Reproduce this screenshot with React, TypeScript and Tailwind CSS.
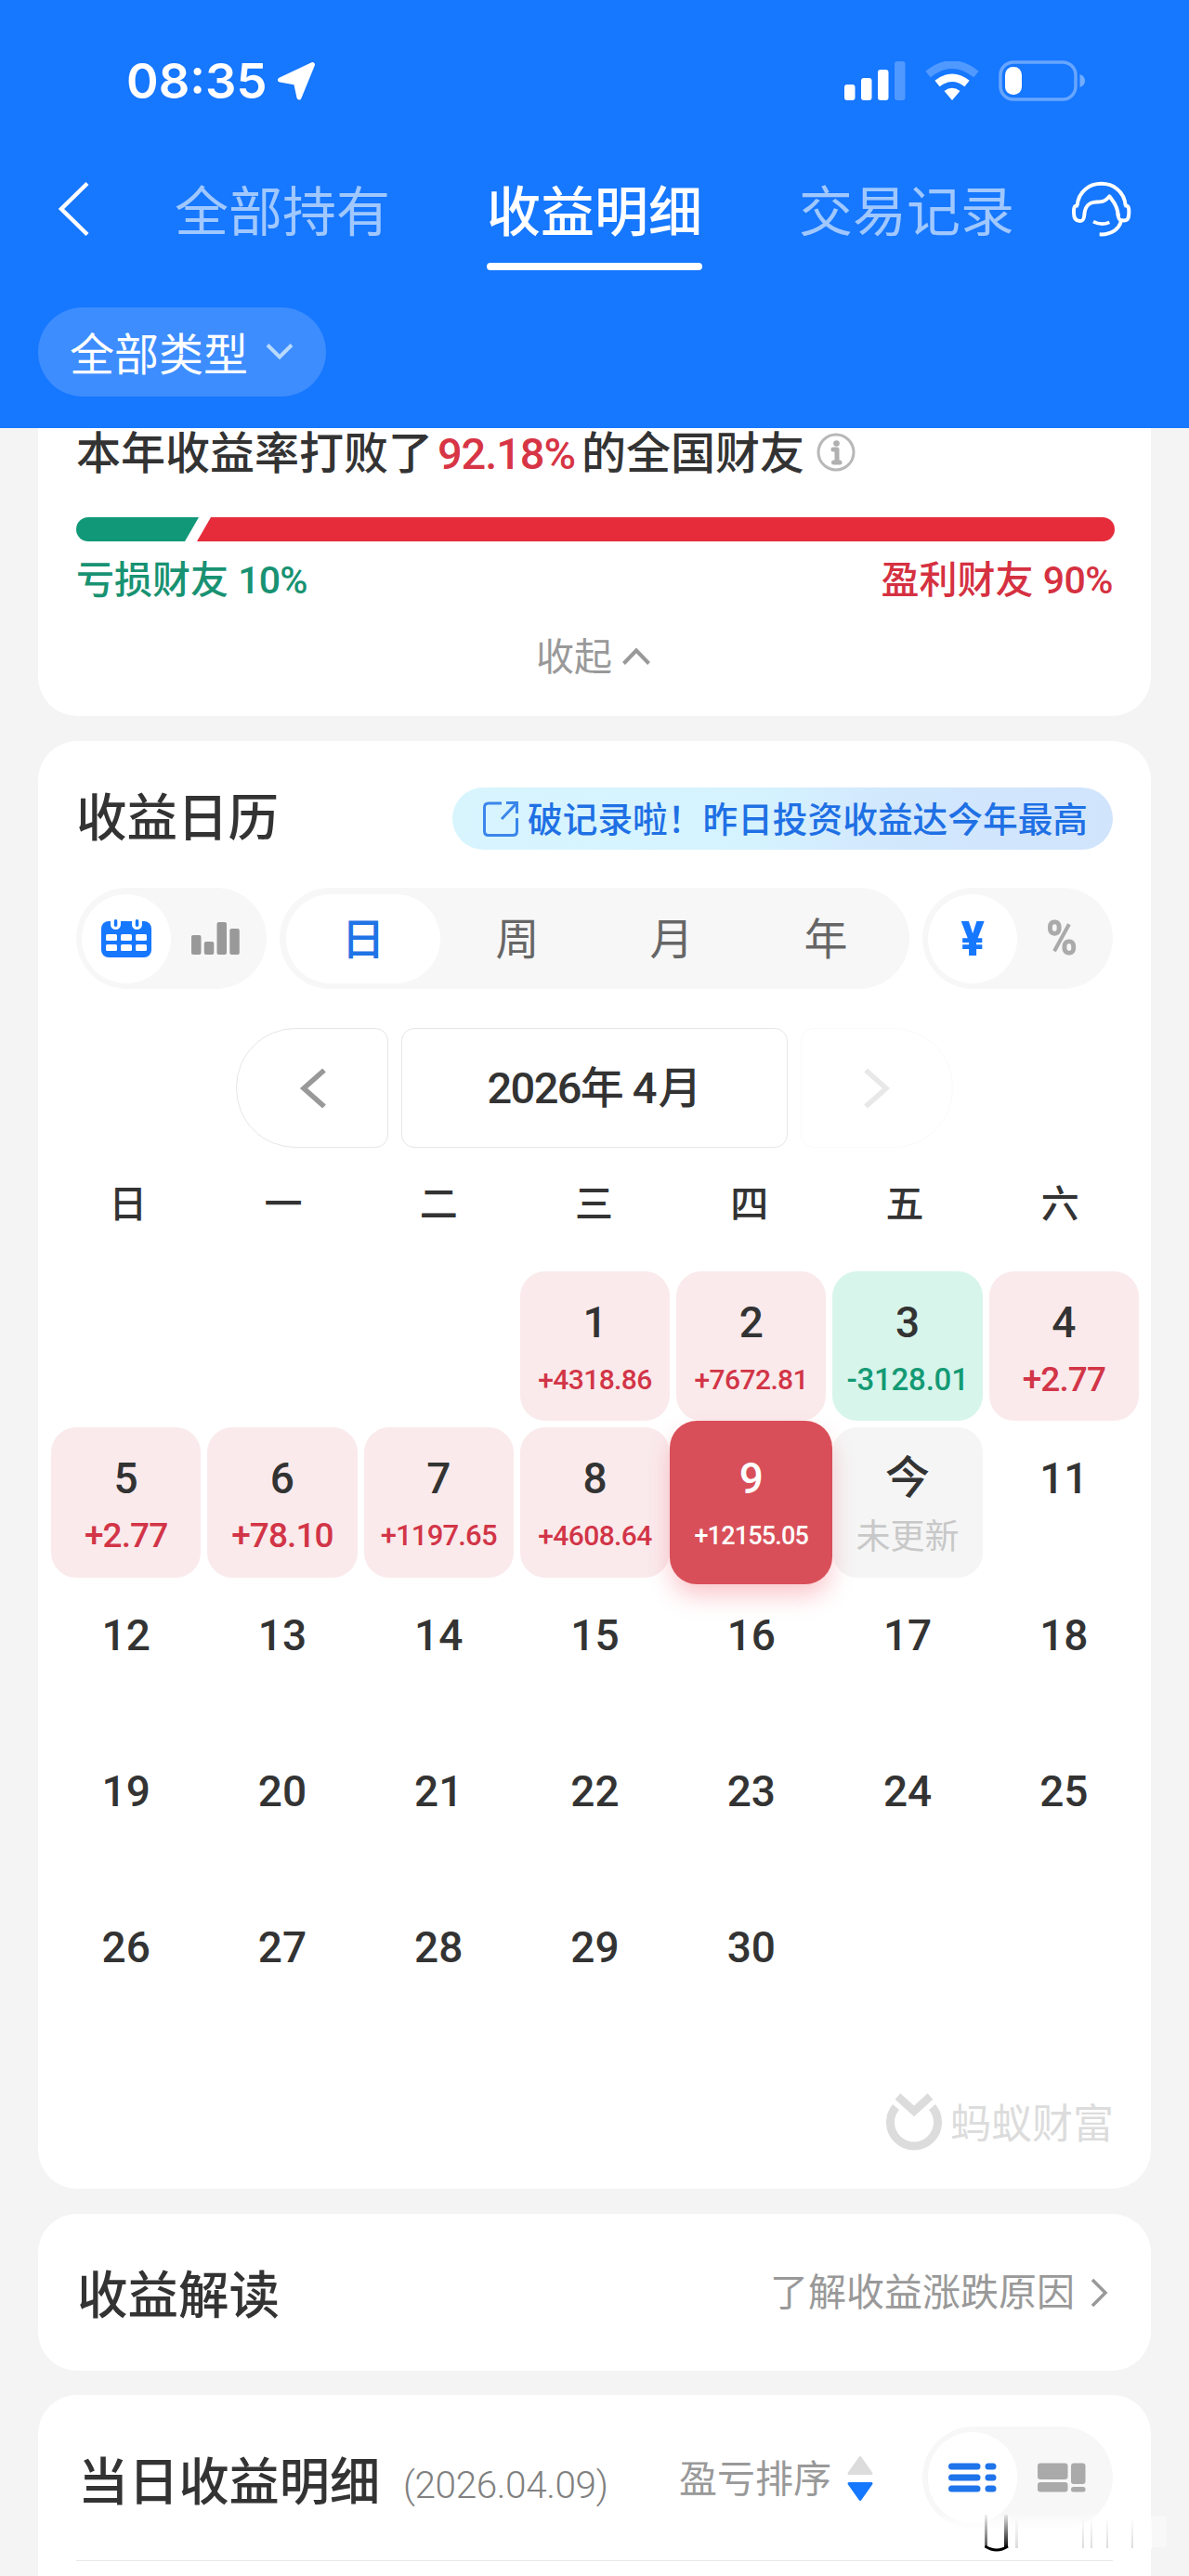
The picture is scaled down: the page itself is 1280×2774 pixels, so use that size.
import React from "react";

type Tone = "up" | "down" | "today" | "selected" | "none";

interface Day {
  label: string;
  amount?: string;
  tone: Tone;
  amountClass?: string;
}

const SMALL = "text-[30px] tracking-[-0.6px]";
const LARGE = "text-[37px] tracking-[-0.9px]";

const leadingBlanks = [0, 1, 2];

const days: Day[] = [
  { label: "1", amount: "+4318.86", tone: "up", amountClass: SMALL },
  { label: "2", amount: "+7672.81", tone: "up", amountClass: SMALL },
  { label: "3", amount: "-3128.01", tone: "down", amountClass: "text-[33px] tracking-[-0.2px]" },
  { label: "4", amount: "+2.77", tone: "up", amountClass: LARGE },
  { label: "5", amount: "+2.77", tone: "up", amountClass: LARGE },
  { label: "6", amount: "+78.10", tone: "up", amountClass: LARGE },
  { label: "7", amount: "+1197.65", tone: "up", amountClass: "text-[31px] tracking-[-0.8px]" },
  { label: "8", amount: "+4608.64", tone: "up", amountClass: SMALL },
  { label: "9", amount: "+12155.05", tone: "selected", amountClass: "text-[27px] tracking-[-0.8px]" },
  { label: "今", amount: "未更新", tone: "today", amountClass: "pt-[2px] text-[37px]" },
  ...Array.from({ length: 20 }, (_, i): Day => ({ label: String(i + 11), tone: "none" })),
];

const cellTone: Record<Tone, string> = {
  up: "bg-[#faeaec] rounded-[27px]",
  down: "bg-[#d8f5ec] rounded-[27px]",
  today: "bg-[#f5f5f5] rounded-[27px]",
  selected:
    "relative z-10 -m-[7px] pt-[7px] rounded-[29px] bg-[#d94f59] shadow-[0_14px_26px_-2px_rgba(240,70,85,0.3)]",
  none: "",
};

const amountTone: Record<Tone, string> = {
  up: "text-[#d23547] font-medium",
  down: "text-[#149a74] font-medium",
  today: "text-[#c8c8c8] font-normal",
  selected: "text-white font-medium",
  none: "",
};

function StatusBar() {
  return (
    <div className="flex h-[74px] items-center pl-[136px]">
      <span className="w-[162px] whitespace-nowrap font-['Inter'] text-[52.5px] font-semibold leading-[74px] text-white">
        08:35
      </span>
      <svg className="h-[43px] w-[43px]" viewBox="0 0 43 43">
        <path
          d="M38.5 3.5 L24 39 L20.5 23 L3.5 20 Z"
          fill="#fff"
          stroke="#fff"
          strokeWidth="5"
          strokeLinejoin="round"
        />
      </svg>
      <svg className="ml-[568px] h-[42px] w-[66px]" viewBox="0 0 66 42" fill="#fff">
        <rect x="0" y="25" width="11.5" height="17" rx="3" />
        <rect x="18" y="18" width="11.5" height="24" rx="3" />
        <rect x="36" y="9" width="11.5" height="33" rx="3" />
        <rect x="54" y="0" width="11.5" height="42" rx="3" opacity="0.25" />
      </svg>
      <svg className="ml-[21px] h-[42px] w-[58px]" viewBox="0 0 58 42">
        <path d="M3 14 Q29 -7 55 14" fill="none" stroke="#fff" strokeWidth="8.5" opacity="0.25" />
        <path d="M13 24 Q29 11.500 45 24" fill="none" stroke="#fff" strokeWidth="8.500" />
        <path d="M29 42 L20.500 32 Q29 25.500 37.500 32 Z" fill="#fff" />
      </svg>
      <svg className="ml-[21px] h-[44px] w-[95px]" viewBox="0 0 95 44">
        <rect x="2" y="2" width="81" height="40" rx="14" fill="none" stroke="#fff" strokeOpacity="0.35" strokeWidth="3.500" />
        <rect x="7" y="7" width="18" height="30" rx="8.500" fill="#fff" />
        <path d="M87.500 15 Q93 17 93 22 Q93 27 87.500 29 Z" fill="#fff" opacity="0.4" />
      </svg>
    </div>
  );
}

function Tabs() {
  const tabs = [
    { name: "全部持有", active: false },
    { name: "收益明细", active: true },
    { name: "交易记录", active: false },
  ];
  return (
    <div className="mt-[50px] flex h-[118px] items-start">
      <svg className="ml-[61px] mt-[21px] h-[60px] w-[36px]" viewBox="0 0 36 60">
        <path d="M33 2.500 L5 30 L33 57.500" fill="none" stroke="#fff" strokeWidth="4.500" />
      </svg>
      <div className="ml-[91px] flex gap-[104px]">
        {tabs.map((t) => (
          <div key={t.name} className="flex w-[232px] flex-col">
            <span
              className={
                t.active
                  ? "h-[109px] whitespace-nowrap pt-px text-[58px] font-medium leading-[109px] text-white"
                  : "h-[109px] whitespace-nowrap pt-px text-[58px] leading-[109px] text-[#a0c8ff]"
              }
            >
              {t.name}
            </span>
            {t.active && <span className="h-[8px] rounded-full bg-white" />}
          </div>
        ))}
      </div>
      <svg
        className="ml-[61px] mt-[20px] h-[62px] w-[66px]"
        viewBox="66 42 198 186"
        fill="none"
        stroke="#fff"
        strokeWidth="12"
        strokeLinejoin="round"
      >
        <path d="M86 124 C94 30 234 30 242 124" />
        <path d="M90 124 C74 124 75 132 75 148 C75 164 80 174 94 174 C106 174 108 166 109 154 C111 116 134 112 160 112 C172 111 184 102 190 94 C197 106 218 122 218 158" />
        <path d="M238 124 C254 124 253 132 253 148 C253 164 250 174 232 172 C220 172 218 164 218 150" />
        <path d="M228 172 C222 200 196 219 158 217" />
        <path d="M138 176 Q164 190 190 178" strokeWidth="11" />
      </svg>
    </div>
  );
}

function Header() {
  return (
    <header className="h-[461px] bg-[#1677ff] pt-[50px]">
      <StatusBar />
      <Tabs />
      <div className="ml-[41px] mt-[39px] flex h-[96px] w-[310px] items-center rounded-full bg-[#3d8dff] pl-[34px]">
        <span className="w-[211px] whitespace-nowrap pt-[8px] text-[48px] leading-[88px] text-white">全部类型</span>
        <svg className="h-[20px] w-[30px]" viewBox="0 0 30 20">
          <path d="M2 2.500 L15 15.500 L28 2.500" fill="none" stroke="#b9daff" strokeWidth="4" />
        </svg>
      </div>
    </header>
  );
}

function SummaryCard() {
  return (
    <section className="h-[310px] rounded-b-[42px] bg-white px-[41px]">
      <div className="flex h-[52px] items-center whitespace-nowrap text-[48px] font-medium leading-[52px] text-[#333]">
        <span className="w-[389px] pt-[3px]">本年收益率打败了</span>
        <span className="w-[155px] pt-[3px] text-[47px] tracking-[-1.1px] text-[#d73545]">92.18%</span>
        <span className="w-[253px] pt-[3px]">的全国财友</span>
        <svg className="h-[42px] w-[42px]" viewBox="0 0 42 42">
          <circle cx="21" cy="21" r="19" fill="none" stroke="#b8b8b8" strokeWidth="3" />
          <circle cx="21.500" cy="11.500" r="3.300" fill="#b0b0b0" />
          <path d="M18 18 h4 v14 M18.500 32 h6.500" fill="none" stroke="#b0b0b0" strokeWidth="5" strokeLinecap="round" strokeLinejoin="round" />
        </svg>
      </div>
      <svg className="mt-[44px] block h-[26px] w-[1118px]" viewBox="0 0 1118 26">
        <path d="M13 0 H132 L117 26 H13 A13 13 0 0 1 13 0 Z" fill="#119878" />
        <path d="M145 0 H1105 A13 13 0 0 1 1105 26 H130 Z" fill="#e62c3b" />
      </svg>
      <div className="mt-[17px] flex justify-between whitespace-nowrap text-[41px] font-medium leading-[50px]">
        <span className="text-[#189272]">
          亏损财友 <span className="tracking-[-0.8px]">10%</span>
        </span>
        <span className="text-[#d53141]">
          盈利财友 <span className="tracking-[-0.5px]">90%</span>
        </span>
      </div>
      <div className="mt-[33px] flex items-center whitespace-nowrap pl-[495px] text-[41px] leading-[50px] text-[#999]">
        <span className="w-[93px]">收起</span>
        <svg className="mb-[3px] h-[20px] w-[30px]" viewBox="0 0 30 20">
          <path d="M1.500 17.500 L15 3.500 L28.500 17.500" fill="none" stroke="#999" strokeWidth="4" />
        </svg>
      </div>
    </section>
  );
}

function CalendarIcon() {
  return (
    <svg className="h-[41px] w-[54px]" viewBox="0 0 54 41">
      <rect x="0" y="2" width="54" height="39" rx="8" fill="#1677ff" />
      <g fill="#fff">
        <rect x="10" y="-4" width="11" height="15" rx="5.500" />
        <rect x="33" y="-4" width="11" height="15" rx="5.500" />
        <rect x="5" y="16" width="12" height="7" rx="1.500" />
        <rect x="21" y="16" width="12" height="7" rx="1.500" />
        <rect x="37" y="16" width="12" height="7" rx="1.500" />
        <rect x="5" y="27" width="12" height="7" rx="1.500" />
        <rect x="21" y="27" width="12" height="7" rx="1.500" />
        <rect x="37" y="27" width="12" height="7" rx="1.500" />
      </g>
      <g fill="#1677ff">
        <rect x="13.800" y="0" width="3.500" height="8" rx="1.700" />
        <rect x="36.800" y="0" width="3.500" height="8" rx="1.700" />
      </g>
    </svg>
  );
}

function Segments() {
  const periods = ["日", "周", "月", "年"];
  return (
    <div className="mx-[41px] mt-[41px] flex h-[109px] justify-between">
      <div className="flex w-[205px] items-center rounded-full bg-[#f7f7f7] pl-[6px]">
        <div className="flex h-[96px] w-[96px] items-center justify-center rounded-full bg-white">
          <CalendarIcon />
        </div>
        <svg className="ml-[22px] h-[35px] w-[52px]" viewBox="0 0 52 35" fill="#999">
          <rect x="0" y="14" width="10.500" height="21" rx="2" />
          <rect x="13.800" y="21" width="10.500" height="14" rx="2" />
          <rect x="27.500" y="0" width="10.500" height="35" rx="2" />
          <rect x="41.300" y="7" width="10.500" height="28" rx="2" />
        </svg>
      </div>
      <div className="flex w-[678px] items-center rounded-full bg-[#f7f7f7] px-[7px]">
        {periods.map((p, i) => (
          <div
            key={p}
            className={
              i === 0
                ? "flex h-[96px] w-[166px] items-center justify-center rounded-full bg-white pt-[4px] text-[47px] font-medium text-[#1f74e6]"
                : "flex h-[96px] w-[166px] items-center justify-center pt-[4px] text-[47px] text-[#666]"
            }
          >
            {p}
          </div>
        ))}
      </div>
      <div className="flex w-[205px] items-center rounded-full bg-[#f7f7f7] pl-[6px]">
        <div className="flex h-[96px] w-[96px] items-center justify-center rounded-full bg-white font-['Roboto'] text-[52px] font-black text-[#1677ff]">
          <span className="scale-x-90 pt-[2px]">¥</span>
        </div>
        <div className="flex h-[96px] w-[96px] items-center justify-center font-['Roboto'] text-[51px] font-black text-[#aaa]">
          <span className="scale-x-90 pt-[2px]">%</span>
        </div>
      </div>
    </div>
  );
}

function MonthPicker() {
  return (
    <div className="mt-[42px] flex h-[129px] gap-[14px] pl-[213px]">
      <div className="flex w-[164px] items-center rounded-l-[64px] rounded-r-[14px] border border-[#e6e6e6] pl-[67px]">
        <svg className="h-[42px] w-[30px]" viewBox="0 0 30 42">
          <path d="M27 1.500 L5 21 L27 40.500" fill="none" stroke="#999" strokeWidth="5.500" />
        </svg>
      </div>
      <div className="flex w-[416px] items-center justify-center whitespace-nowrap rounded-[14px] border border-[#e6e6e6] pt-[2px] text-[47px] font-medium text-[#333]">
        <span className="tracking-[-1.7px]">2026</span>年
        <span className="ml-[9px] mr-px">4</span>月
      </div>
      <div className="flex w-[164px] items-center rounded-l-[14px] rounded-r-[64px] border border-[#fafafa] pl-[66px]">
        <svg className="h-[42px] w-[30px]" viewBox="0 0 30 42">
          <path d="M3 1.500 L25 21 L3 40.500" fill="none" stroke="#e8e8e8" strokeWidth="5.500" />
        </svg>
      </div>
    </div>
  );
}

function DayCell({ day }: { day: Day }) {
  return (
    <div className={`flex flex-col items-center whitespace-nowrap ${cellTone[day.tone]}`}>
      <span
        className={
          day.tone === "selected"
            ? "mt-[25px] h-[60px] text-[46px] font-medium leading-[60px] text-white"
            : day.tone === "today"
              ? "mt-[25px] h-[60px] text-[48px] font-medium leading-[60px] text-[#333]"
              : "mt-[25px] h-[60px] text-[46px] font-medium leading-[60px] text-[#333]"
        }
      >
        {day.label}
      </span>
      {day.amount && (
        <span className={`mt-[12px] h-[40px] leading-[40px] ${amountTone[day.tone]} ${day.amountClass ?? ""}`}>
          {day.amount}
        </span>
      )}
    </div>
  );
}

function CalendarCard() {
  const week = ["日", "一", "二", "三", "四", "五", "六"];
  return (
    <section className="mt-[27px] h-[1559px] rounded-[42px] bg-white pt-[50px]">
      <div className="mx-[41px] flex h-[67px] items-center justify-between whitespace-nowrap">
        <h2 className="text-[54.5px] font-medium leading-[67px] text-[#333]">收益日历</h2>
        <div className="flex h-[67px] w-[711px] items-center rounded-full bg-[linear-gradient(100deg,#d8f5fe_0%,#d5f3ff_45%,#d2e8fd_65%,#d0e4fc_100%)] pl-[32px]">
          <svg className="h-[40px] w-[40px]" viewBox="0 0 40 40" fill="none" stroke="#3b86ea" strokeWidth="3">
            <path d="M21 3 H7 Q2.500 3 2.500 7.500 V33 Q2.500 37.500 7 37.500 H33 Q37.500 37.500 37.500 33 V19" />
            <path d="M26 2.500 H37.500 V14 M37 3 L21 20" />
          </svg>
          <span className="ml-[9px] pt-[3px] text-[37.7px] font-medium leading-[64px] text-[#1f70e4]">
            破记录啦！昨日投资收益达今年最高
          </span>
        </div>
      </div>
      <Segments />
      <MonthPicker />
      <div className="ml-[13px] mt-[31px] grid w-[1171px] grid-cols-7 text-center text-[41px] font-medium leading-[60px] text-[#333]">
        {week.map((w) => (
          <span key={w}>{w}</span>
        ))}
      </div>
      <div className="ml-[14px] mt-[42px] grid w-[1171px] auto-rows-[161.3px] grid-cols-7 gap-[7px]">
        {leadingBlanks.map((b) => (
          <div key={`blank-${b}`} />
        ))}
        {days.map((d) => (
          <DayCell key={d.label} day={d} />
        ))}
      </div>
      <div className="mt-[51px] flex h-[63px] items-center justify-end pr-[40px]">
        <svg className="h-[63px] w-[60px]" viewBox="0 0 60 63" fill="none" stroke="#dcdcdc">
          <path d="M10.500 15 A25.500 25.500 0 1 0 49.500 15" strokeWidth="9" />
          <path d="M12.500 3.500 L30 19.500 L47.500 3.500" strokeWidth="8.500" />
        </svg>
        <span className="ml-[9px] pt-[4px] text-[44px] leading-[60px] text-[#dcdcdc]">蚂蚁财富</span>
      </div>
    </section>
  );
}

function InsightCard() {
  return (
    <section className="mt-[27px] flex h-[169px] items-center justify-between whitespace-nowrap rounded-[42px] bg-white pl-[42px] pr-[46px]">
      <h2 className="pt-[6px] text-[54.5px] font-medium leading-[70px] text-[#333]">收益解读</h2>
      <div className="flex items-center text-[41px] leading-[60px] text-[#999]">
        <span className="pt-px">了解收益涨跌原因</span>
        <svg className="ml-[17px] h-[32px] w-[19px]" viewBox="0 0 19 32">
          <path d="M2 2 L16 16 L2 30" fill="none" stroke="#999" strokeWidth="3.500" />
        </svg>
      </div>
    </section>
  );
}

function StampShadow() {
  return (
    <svg className="absolute left-[941px] top-[126px] h-[45px] w-[280px]" viewBox="0 0 280 45">
      <defs>
        <linearGradient id="veil" x1="0" y1="0" x2="0" y2="1">
          <stop offset="0" stopColor="#fff" stopOpacity="0" />
          <stop offset="0.35" stopColor="#fff" stopOpacity="0.8" />
          <stop offset="1" stopColor="#fff" />
        </linearGradient>
        <linearGradient id="ink" x1="0" y1="0" x2="0" y2="1">
          <stop offset="0" stopColor="#000" stopOpacity="0.08" />
          <stop offset="1" stopColor="#000" stopOpacity="0.95" />
        </linearGradient>
        <linearGradient id="streak" x1="0" y1="0" x2="0" y2="1">
          <stop offset="0" stopColor="#000" stopOpacity="0" />
          <stop offset="1" stopColor="#000" stopOpacity="0.14" />
        </linearGradient>
      </defs>
      <rect x="0" y="0" width="258" height="40" fill="url(#veil)" />
      <rect x="258" y="4" width="16" height="34" fill="#fff" opacity="0.4" />
      <rect x="78" y="3" width="3" height="35" fill="url(#ink)" opacity="0.7" />
      <rect x="99" y="3" width="4" height="35" fill="url(#ink)" />
      <path d="M78.500 37 Q91 45 103 37" fill="none" stroke="#000" strokeWidth="3" />
      <g fill="url(#streak)">
        <rect x="111" y="6" width="3" height="33" />
        <rect x="183" y="6" width="2" height="33" />
        <rect x="192" y="6" width="2" height="33" />
        <rect x="209" y="6" width="2" height="33" />
        <rect x="236" y="6" width="2" height="33" />
      </g>
    </svg>
  );
}

function DetailCard() {
  return (
    <section className="relative mt-[26px] h-[195px] rounded-t-[42px] bg-white px-[41px] pt-[34px]">
      <div className="flex h-[110px] items-center whitespace-nowrap">
        <h2 className="ml-[2px] w-[350px] pt-[11px] text-[54.2px] font-medium leading-[80px] text-[#333]">当日收益明细</h2>
        <span className="w-[256px] pt-[16px] text-[40.5px] font-light leading-[80px] tracking-[-0.4px] text-[#808080]">
          (2026.04.09)
        </span>
        <span className="ml-[41px] w-[180px] pt-[3px] text-[41px] leading-[80px] text-[#999]">盈亏排序</span>
        <svg className="mt-[1px] h-[50px] w-[30px]" viewBox="0 0 30 50">
          <path d="M15 2.500 L27 19.500 H3 Z" fill="#dcdcdc" stroke="#dcdcdc" strokeWidth="3" strokeLinejoin="round" />
          <path d="M15 47.500 L27 30.500 H3 Z" fill="#1677ff" stroke="#1677ff" strokeWidth="3" strokeLinejoin="round" />
        </svg>
        <div className="ml-auto flex h-[110px] w-[205px] items-center rounded-full bg-[#f7f7f7] pl-[6px]">
          <div className="flex h-[98px] w-[96px] items-center justify-center rounded-full bg-white">
            <svg className="h-[32px] w-[52px]" viewBox="0 0 52 32" fill="#1f74ea">
              <rect x="0" y="0.500" width="34.500" height="7" rx="3.500" />
              <rect x="39.500" y="0.500" width="12" height="7" rx="3.500" />
              <rect x="0" y="12.500" width="34.500" height="7" rx="3.500" />
              <rect x="39.500" y="12.500" width="12" height="7" rx="3.500" />
              <rect x="0" y="24.500" width="34.500" height="7" rx="3.500" />
              <rect x="39.500" y="24.500" width="12" height="7" rx="3.500" />
            </svg>
          </div>
          <svg className="ml-[22px] h-[32px] w-[52px]" viewBox="0 0 52 32" fill="#aaa">
            <rect x="0" y="0.500" width="32.500" height="17.500" rx="3" />
            <rect x="0" y="21" width="32.500" height="10.500" rx="3" />
            <rect x="36" y="0.500" width="15.500" height="22.500" rx="3" />
            <rect x="36" y="26" width="15.500" height="5.500" rx="2.500" />
          </svg>
        </div>
      </div>
      <div className="mt-[34px] h-px bg-[#e8e8e8]" />
      <StampShadow />
    </section>
  );
}

export default function App() {
  return (
    <div
      lang="zh-CN"
      className="h-[2774px] w-[1280px] overflow-hidden bg-[#f4f4f4] font-['Roboto','Noto_Sans_CJK_SC',sans-serif]"
    >
      <Header />
      <main className="mx-[41px]">
        <SummaryCard />
        <CalendarCard />
        <InsightCard />
        <DetailCard />
      </main>
    </div>
  );
}
